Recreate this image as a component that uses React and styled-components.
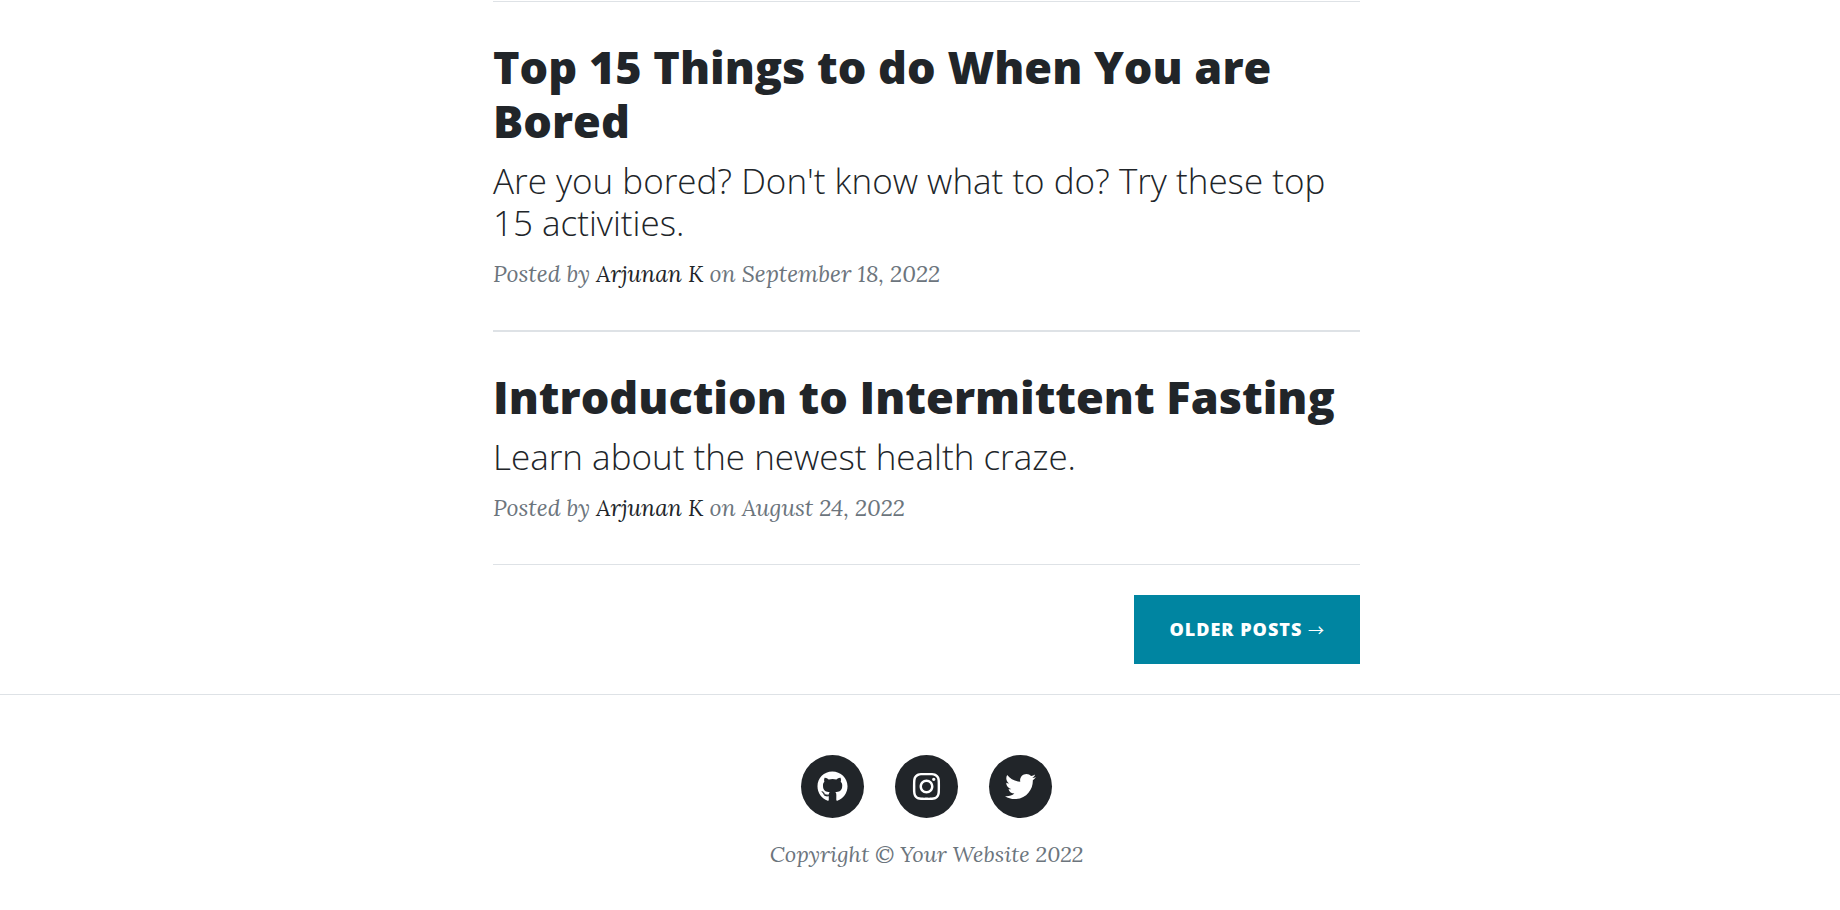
import React from "react";
import styled, { createGlobalStyle } from "styled-components";
import { FaGithub, FaInstagram, FaTwitter } from "react-icons/fa";

const GlobalStyle = createGlobalStyle`
  *, *::before, *::after { box-sizing: border-box; }
  body {
    margin: 0;
    background: #fff;
    color: #212529;
    font-family: Lora, "Liberation Serif", serif;
    font-size: 23px;
    line-height: 35px;
  }
  a { color: inherit; text-decoration: none; }
`;

const Page = styled.div`
  padding-top: 1px;
`;

const Column = styled.main`
  display: flex;
  flex-direction: column;
  max-width: 880px;
  margin: 0 auto;
  padding-left: 13px;
`;

const Divider = styled.hr`
  width: 100%;
  height: ${(p) => (p.$thick ? 2 : 1)}px;
  margin: 0;
  border: 0;
  background: #dee2e6;
`;

const Post = styled.article`
  display: flex;
  flex-direction: column;
  gap: 12px;
  padding: 38px 0 39px;
`;

const PostLink = styled.a`
  display: flex;
  flex-direction: column;
  gap: 12px;
  font-family: "Open Sans", sans-serif;
`;

const Title = styled.h2`
  margin: 0;
  font-size: 45px;
  font-weight: 800;
  line-height: 54px;
`;

const Subtitle = styled.h3`
  margin: 0;
  font-size: 35px;
  font-weight: 300;
  line-height: 42px;
`;

const Meta = styled.p`
  margin: 0;
  color: #6c757d;
  font-style: italic;

  a { color: #212529; }
`;

const Pager = styled.nav`
  display: flex;
  justify-content: flex-end;
  padding: 30px 0;
`;

const PagerLink = styled.a`
  padding: 21px 35px;
  background: #0085a1;
  color: #fff;
  font-family: "Open Sans", sans-serif;
  font-size: 18px;
  font-weight: 800;
  line-height: 27px;
  letter-spacing: 1px;
  text-transform: uppercase;
`;

const Arrow = styled.span`
  font-family: "Noto Sans CJK JP", sans-serif;
  font-size: 16px;
  font-weight: 400;
  line-height: 1;
`;

const Footer = styled.footer`
  display: flex;
  flex-direction: column;
  align-items: center;
  gap: 19px;
  padding: 60px 0 38px 13px;
`;

const SocialList = styled.ul`
  display: flex;
  gap: 31px;
  margin: 0;
  padding: 0;
  list-style: none;
`;

const SocialLink = styled.a`
  display: grid;
  place-items: center;
  width: 63px;
  height: 63px;
  border-radius: 50%;
  background: #212529;

  svg { color: #fff; font-size: 31px; }
`;

const Copyright = styled.p`
  margin: 0;
  color: #6c757d;
  font-size: 22px;
  font-style: italic;
`;

const posts = [
  {
    title: "Top 15 Things to do When You are Bored",
    subtitle: "Are you bored? Don't know what to do? Try these top 15 activities.",
    date: "September 18, 2022",
    thick: true,
  },
  {
    title: "Introduction to Intermittent Fasting",
    subtitle: "Learn about the newest health craze.",
    date: "August 24, 2022",
    thick: false,
  },
];

const socials = [
  { name: "GitHub", Icon: FaGithub },
  { name: "Instagram", Icon: FaInstagram },
  { name: "Twitter", Icon: FaTwitter },
];

export default function App() {
  return (
    <Page>
      <GlobalStyle />
      <Column>
        <Divider />
        {posts.map((post) => (
          <React.Fragment key={post.title}>
            <Post>
              <PostLink href="#">
                <Title>{post.title}</Title>
                <Subtitle>{post.subtitle}</Subtitle>
              </PostLink>
              <Meta>
                Posted by <a href="#">Arjunan K</a> on {post.date}
              </Meta>
            </Post>
            <Divider $thick={post.thick} />
          </React.Fragment>
        ))}
        <Pager>
          <PagerLink href="#">
            Older Posts <Arrow>→</Arrow>
          </PagerLink>
        </Pager>
      </Column>
      <Divider />
      <Footer>
        <SocialList>
          {socials.map(({ name, Icon }) => (
            <li key={name}>
              <SocialLink href="#" aria-label={name}>
                <Icon />
              </SocialLink>
            </li>
          ))}
        </SocialList>
        <Copyright>Copyright © Your Website 2022</Copyright>
      </Footer>
    </Page>
  );
}
